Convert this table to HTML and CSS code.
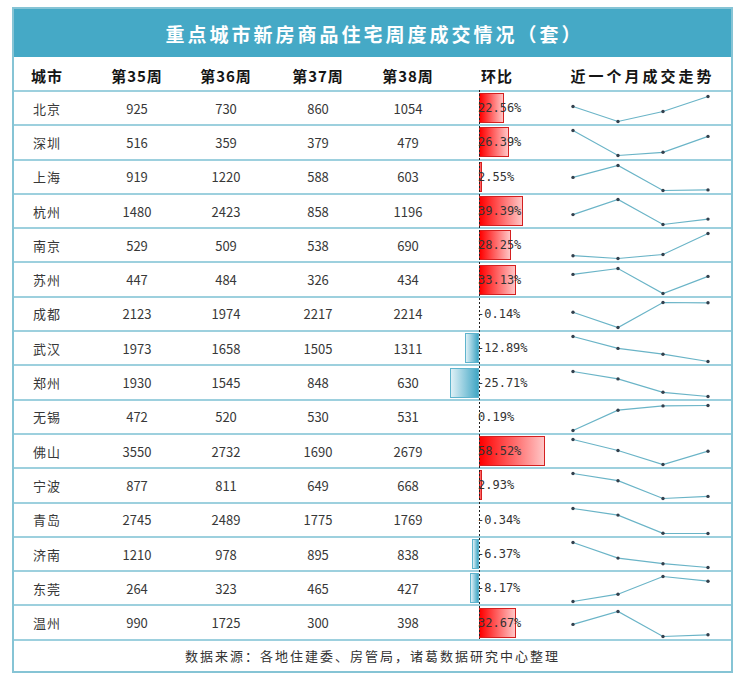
FILE: index.html
```html
<!DOCTYPE html>
<html lang="zh-CN">
<head>
<meta charset="utf-8">
<title>重点城市新房商品住宅周度成交情况</title>
<link rel="stylesheet" href="styles.css">
</head>
<body>
<div class="page">
  <div class="sheet">
    <div class="title">重点城市新房商品住宅周度成交情况（套）</div>
    <div class="grid-row head">
      <div class="c">城市</div>
      <div class="c">第35周</div>
      <div class="c">第36周</div>
      <div class="c">第37周</div>
      <div class="c">第38周</div>
      <div class="c">环比</div>
      <div class="c trend-head">近一个月成交走势</div>
    </div>
    <div id="rows"></div>
    <div class="foot">数据来源：各地住建委、房管局，诸葛数据研究中心整理</div>
    <div class="axis"></div>
  </div>
</div>
<script src="script.js"></script>
</body>
</html>
```
FILE: styles.css
```css
* { box-sizing: border-box; }
body {
  margin: 0;
  background: #ffffff;
  font-family: "Noto Sans CJK SC", "Noto Sans", sans-serif;
}
.page { padding: 7px 0 0 12px; }
.sheet {
  width: 721px;
  border: 2px solid #86c4d5;
  position: relative;
  background: #fff;
}
.title {
  height: 48px;
  background: #45a9c6;
  color: #ffffff;
  font-size: 19px;
  font-weight: 700;
  letter-spacing: 3px;
  display: flex;
  align-items: center;
  justify-content: center;
  padding-left: 4px;
}
.grid-row {
  display: grid;
  grid-template-columns: 66px 114px 64px 120px 60px 118px 1fr;
  align-items: center;
}
.c { text-align: center; white-space: nowrap; }
.head {
  height: 33px;
  font-size: 15px;
  font-weight: 700;
  color: #151515;
  padding-top: 3px;
}
.head .c { letter-spacing: 1px; }
.head .trend-head { letter-spacing: 3px; padding-right: 2px; }
.row {
  height: 34.3px;
  border-top: 2px solid #9dd0de;
  font-size: 13px;
  color: #383838;
}
.city { letter-spacing: 1px; }
.ratio {
  align-self: stretch;
  display: grid;
  grid-template-columns: 41px 1fr;
  align-items: center;
}
.neg-bar {
  grid-column: 1;
  grid-row: 1;
  justify-self: end;
  height: 30px;
  background: linear-gradient(to right, #dff0f6, #42a7c5);
  border: 1px solid #5fb4cd;
}
.pos-bar {
  grid-column: 2;
  grid-row: 1;
  justify-self: start;
  height: 30px;
  background: linear-gradient(to right, #ff0000, #ffc6c6);
  border: 1px solid #d42020;
}
.pct {
  grid-column: 2;
  grid-row: 1;
  justify-self: start;
  font-family: "DejaVu Sans Mono", monospace;
  font-size: 12px;
  color: #333;
  z-index: 1;
  margin-left: -1px;
}
.pct.neg { margin-left: -2px; }
.trend { align-self: stretch; display: flex; align-items: center; }
.trend svg { display: block; }
.spark-line { fill: none; stroke: #6ab4c7; stroke-width: 1.2; }
.spark-dot { fill: #33404d; }
.foot {
  height: 32.2px;
  border-top: 2px solid #9dd0de;
  display: flex;
  align-items: center;
  justify-content: center;
  font-size: 13px;
  letter-spacing: 2px;
  color: #333;
}
.axis {
  position: absolute;
  left: 465px;
  top: 81px;
  bottom: 32px;
  width: 1px;
  background: repeating-linear-gradient(to bottom, #222 0 2px, transparent 2px 4px);
}
```
FILE: script.js
```js
var data = [
  ["北京", 925, 730, 860, 1054, "22.56%"],
  ["深圳", 516, 359, 379, 479, "26.39%"],
  ["上海", 919, 1220, 588, 603, "2.55%"],
  ["杭州", 1480, 2423, 858, 1196, "39.39%"],
  ["南京", 529, 509, 538, 690, "28.25%"],
  ["苏州", 447, 484, 326, 434, "33.13%"],
  ["成都", 2123, 1974, 2217, 2214, "-0.14%"],
  ["武汉", 1973, 1658, 1505, 1311, "-12.89%"],
  ["郑州", 1930, 1545, 848, 630, "-25.71%"],
  ["无锡", 472, 520, 530, 531, "0.19%"],
  ["佛山", 3550, 2732, 1690, 2679, "58.52%"],
  ["宁波", 877, 811, 649, 668, "2.93%"],
  ["青岛", 2745, 2489, 1775, 1769, "-0.34%"],
  ["济南", 1210, 978, 895, 838, "-6.37%"],
  ["东莞", 264, 323, 465, 427, "-8.17%"],
  ["温州", 990, 1725, 300, 398, "32.67%"]
];
var SCALE = 1.12;
var xs = [17, 62, 107, 152];
var rows = document.getElementById("rows");
var svgNS = "http://www.w3.org/2000/svg";

data.forEach(function (d) {
  var row = document.createElement("div");
  row.className = "grid-row row";
  var html = '<div class="c city">' + d[0] + '</div>';
  for (var i = 1; i <= 4; i++) html += '<div class="c">' + d[i] + '</div>';
  var p = parseFloat(d[5]);
  var w = Math.abs(p) * SCALE;
  var ratio = '<div class="ratio">';
  if (w >= 1) {
    ratio += '<div class="' + (p < 0 ? 'neg-bar' : 'pos-bar') + '" style="width:' + w.toFixed(1) + 'px"></div>';
  }
  ratio += '<div class="pct' + (p < 0 ? ' neg' : '') + '">' + d[5] + '</div></div>';
  html += ratio + '<div class="trend"></div>';
  row.innerHTML = html;

  var vals = d.slice(1, 5);
  var mn = Math.min.apply(null, vals), mx = Math.max.apply(null, vals);
  var svg = document.createElementNS(svgNS, "svg");
  svg.setAttribute("width", "175");
  svg.setAttribute("height", "32");
  var pts = vals.map(function (v, k) {
    var n = mx === mn ? 0.5 : (v - mn) / (mx - mn);
    return [xs[k], 4.5 + (1 - n) * 25];
  });
  var pl = document.createElementNS(svgNS, "polyline");
  pl.setAttribute("class", "spark-line");
  pl.setAttribute("points", pts.map(function (q) { return q[0] + "," + q[1].toFixed(1); }).join(" "));
  svg.appendChild(pl);
  pts.forEach(function (q) {
    var c = document.createElementNS(svgNS, "circle");
    c.setAttribute("class", "spark-dot");
    c.setAttribute("cx", q[0]);
    c.setAttribute("cy", q[1].toFixed(1));
    c.setAttribute("r", "1.7");
    svg.appendChild(c);
  });
  row.querySelector(".trend").appendChild(svg);
  rows.appendChild(row);
});
```
